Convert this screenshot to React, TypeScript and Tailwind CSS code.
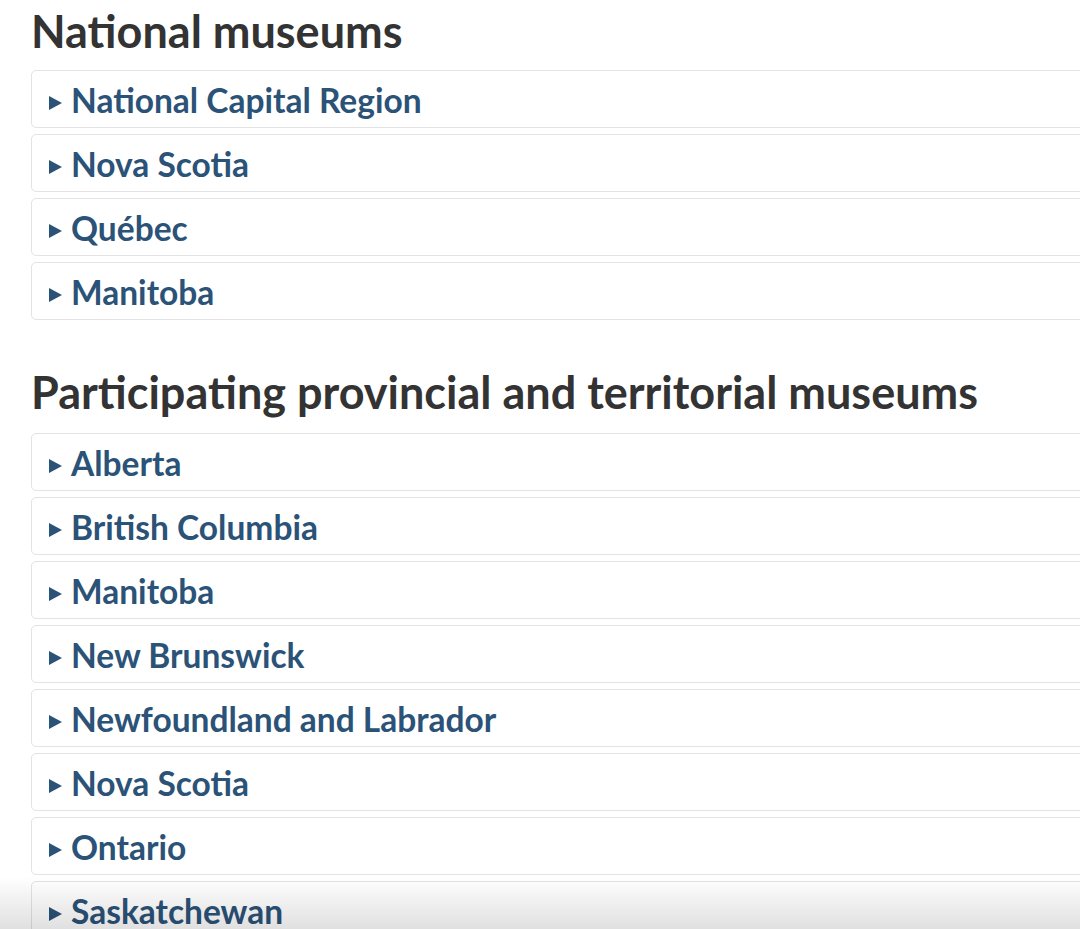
const national = ["National Capital Region", "Nova Scotia", "Québec", "Manitoba"];

const provincial = [
  "Alberta",
  "British Columbia",
  "Manitoba",
  "New Brunswick",
  "Newfoundland and Labrador",
  "Nova Scotia",
  "Ontario",
  "Saskatchewan",
];

function Item({ label }: { label: string }) {
  return (
    <div className="flex h-[58px] items-center rounded-[5px] border border-[#e3e3e3] bg-white pl-[17px]">
      <svg viewBox="0 0 13 14" className="mr-[9px] mt-[7px] h-[14px] w-[13px] shrink-0">
        <path d="M0 0 L13 7 L0 14 Z" fill="#2b5277" />
      </svg>
      <span className="mt-[3px] text-[33.5px] font-bold leading-none text-[#2b5277]">{label}</span>
    </div>
  );
}

export default function App() {
  return (
    <div
      className="relative min-h-[929px] overflow-hidden bg-white pl-[31px] pt-[7px]"
      style={{ fontFamily: "Lato, 'Open Sans', sans-serif" }}
    >
      <div className="w-[1100px]">
        <h2 className="mb-[15px] text-[45px] font-bold leading-[48px] text-[#333333]">
          National museums
        </h2>
        <div className="flex flex-col gap-[6px]">
          {national.map((n, i) => (
            <Item key={i} label={n} />
          ))}
        </div>

        <h2 className="mb-[17px] mt-[48px] text-[45px] font-bold leading-[48px] text-[#333333]">
          Participating provincial and territorial museums
        </h2>
        <div className="flex flex-col gap-[6px]">
          {provincial.map((n, i) => (
            <Item key={i} label={n} />
          ))}
        </div>
      </div>

      {/* fade at the bottom edge */}
      <div className="pointer-events-none fixed bottom-0 left-0 h-[52px] w-full bg-gradient-to-b from-white to-[#e0e0e0] mix-blend-multiply" />
    </div>
  );
}
